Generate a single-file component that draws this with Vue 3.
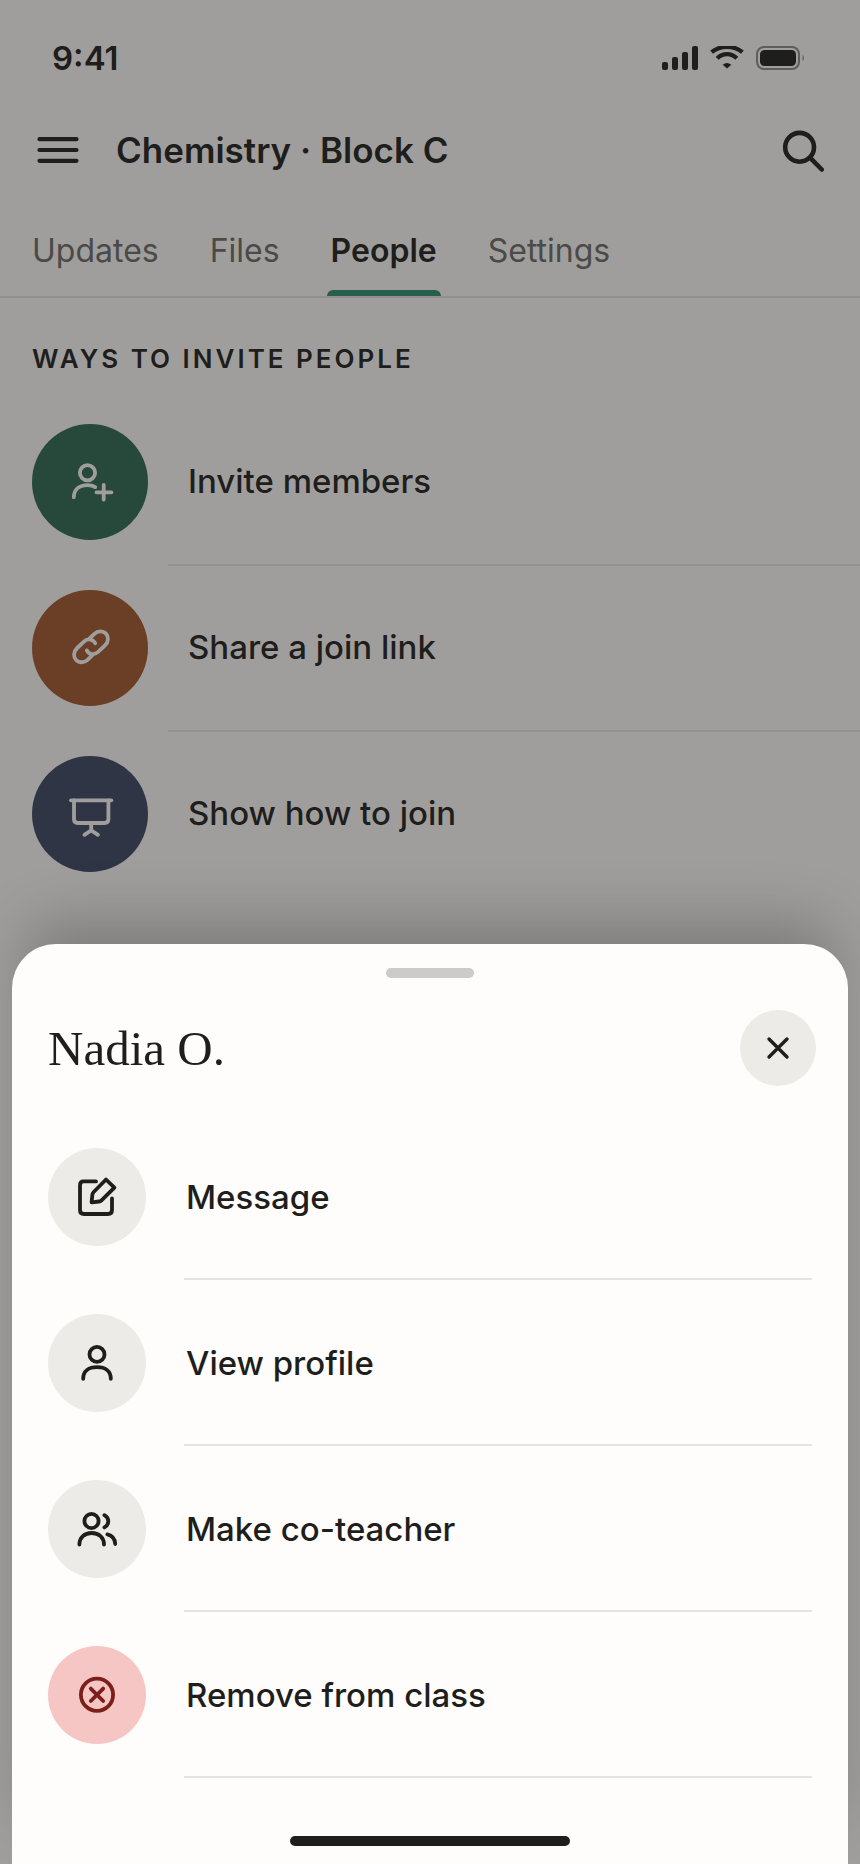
<script setup>
const tabs = [
  { label: 'Updates', active: false },
  { label: 'Files', active: false },
  { label: 'People', active: true },
  { label: 'Settings', active: false },
]

const invites = [
  {
    label: 'Invite members',
    tone: 'green',
    paths: [
      'M33.1 18.7a7.6 7.6 0 1 1-15.2 0a7.6 7.6 0 1 1 15.2 0Z',
      'M11.8 43.2C12 35.5 17.5 31.2 25.5 31.2C28.6 31.2 31.2 31.8 33.2 33.1',
      'M41.7 31v14.5M34.5 38.3h15',
    ],
  },
  {
    label: 'Share a join link',
    tone: 'brown',
    paths: [
      'M24.8 30.4C26.8 34.6 32.2 35.4 35.8 32.2L42.8 25.6C46.8 21.8 46.8 16.6 43.8 13.4C40.8 10.4 35.8 10.8 32.4 13.8L27.6 18.4',
      'M33.2 23.2C31.2 19 25.8 18.2 22.2 21.4L15.2 28C11.2 31.8 11.2 37 14.2 40.2C17.2 43.2 22.2 42.8 25.6 39.8L30.4 35.2',
    ],
  },
  {
    label: 'Show how to join',
    tone: 'navy',
    paths: [
      'M9 14.3h40.3',
      'M12 14.3v18.7q0 4 4 4h26.4q4 0 4-4V14.3',
      'M29.2 37v7.5M22.4 48.8l6.8-4.4l6.8 4.4',
    ],
  },
]

const actions = [
  {
    label: 'Message',
    danger: false,
    paths: [
      'M27 12.4H14.5q-3.5 0-3.5 4v24.6q0 4 4 4H39q4 0 4-4V29.5',
      'M37 10.5L45.4 18.6L32.5 31.4Q31.5 32.4 30 32.5L22.6 33.3L23.4 25.5Q23.6 24.1 24.7 23Z',
    ],
  },
  {
    label: 'View profile',
    danger: false,
    paths: [
      'M35.5 19.4a7.5 7.5 0 1 1-15 0a7.5 7.5 0 1 1 15 0Z',
      'M14.2 43.8C14.2 36 20 32.2 28 32.2S41.8 36 41.8 43.8',
    ],
  },
  {
    label: 'Make co-teacher',
    danger: false,
    paths: [
      'M29.6 20a7.1 7.1 0 1 1-14.2 0a7.1 7.1 0 1 1 14.2 0Z',
      'M10.4 43.6C10.4 36.6 15.5 32 22.7 32S35 36.6 35 43.6',
      'M35.4 14.2C40.6 17 40.6 23.6 35.4 26.4M38.4 33.4C43.5 34.6 46 38.3 46.2 43',
    ],
  },
  {
    label: 'Remove from class',
    danger: true,
    paths: [
      'M44.1 27.8a16.1 16.1 0 1 1-32.2 0a16.1 16.1 0 1 1 32.2 0Z',
      'M21.8 21.6l12.4 12.4M34.2 21.6L21.8 34',
    ],
  },
]
</script>

<template>
  <div class="screen">
    <main class="page">
      <div class="status">
        <span class="time">9:41</span>
        <div class="indicators">
          <svg width="36" height="24" viewBox="0 0 36 24" fill="currentColor" aria-hidden="true">
            <rect x="0" y="16" width="6" height="8" rx="2" />
            <rect x="10" y="11" width="6" height="13" rx="2" />
            <rect x="20" y="6" width="6" height="18" rx="2" />
            <rect x="30" y="0" width="6" height="24" rx="2" />
          </svg>
          <svg width="34" height="24" viewBox="0 0 34 24" aria-hidden="true">
            <g fill="none" stroke="currentColor" stroke-width="4.2">
              <path d="M1.6 6.2C10 -1 24 -1 32.4 6.2" />
              <path d="M7.2 12.4C12.5 6.7 21.5 6.7 26.8 12.4" />
            </g>
            <path d="M12.7 18.7Q17 15.4 21.3 18.7L17 22.6Z" fill="currentColor" />
          </svg>
          <svg width="49" height="24" viewBox="0 0 49 24" aria-hidden="true">
            <g opacity="0.5">
              <rect x="1" y="1" width="42" height="22" rx="7" fill="none" stroke="currentColor" stroke-width="2" />
              <path d="M46.5 9q3 3 0 6Z" fill="currentColor" />
            </g>
            <rect x="4" y="4" width="36" height="16" rx="4.5" fill="currentColor" />
          </svg>
        </div>
      </div>

      <header class="topbar">
        <button class="icon-button" type="button" aria-label="Open menu">
          <svg width="44" height="44" viewBox="0 0 44 44" aria-hidden="true">
            <path d="M3.5 11.2h37M3.5 22h37M3.5 32.8h37" fill="none" stroke="currentColor" stroke-width="4.2" stroke-linecap="round" />
          </svg>
        </button>
        <h1 class="class-name">Chemistry · Block C</h1>
        <button class="icon-button" type="button" aria-label="Search">
          <svg width="44" height="44" viewBox="0 0 44 44" fill="none" stroke="currentColor" stroke-linecap="round" aria-hidden="true">
            <circle cx="19.6" cy="19.3" r="14.4" stroke-width="4.6" />
            <path d="M31 30.6L41.7 41.5" stroke-width="4.6" />
          </svg>
        </button>
      </header>

      <nav class="tabs" aria-label="Class sections">
        <a v-for="tab in tabs" :key="tab.label" href="#" class="tab" :class="{ active: tab.active }">{{ tab.label }}</a>
      </nav>

      <section>
        <h2 class="section-title">WAYS TO INVITE PEOPLE</h2>
        <ul class="list">
          <li v-for="item in invites" :key="item.label">
            <button type="button" class="invite">
              <span class="disc" :class="item.tone">
                <svg class="glyph" viewBox="0 0 56 56" aria-hidden="true">
                  <path v-for="d in item.paths" :key="d" :d="d" />
                </svg>
              </span>
              <span class="invite-label">{{ item.label }}</span>
            </button>
          </li>
        </ul>
      </section>
    </main>

    <div class="scrim"></div>

    <section class="sheet" role="dialog" aria-labelledby="sheet-title">
      <div class="handle"></div>
      <header class="sheet-head">
        <h2 id="sheet-title" class="person">Nadia O.</h2>
        <button class="close" type="button" aria-label="Close">
          <svg width="28" height="28" viewBox="0 0 28 28" aria-hidden="true">
            <path d="M5 5l18 18M23 5L5 23" fill="none" stroke="currentColor" stroke-width="3.4" stroke-linecap="round" />
          </svg>
        </button>
      </header>
      <ul class="list">
        <li v-for="item in actions" :key="item.label">
          <button type="button" class="action">
            <span class="chip" :class="{ danger: item.danger }">
              <svg class="glyph" viewBox="0 0 56 56" aria-hidden="true">
                <path v-for="d in item.paths" :key="d" :d="d" />
              </svg>
            </span>
            <span class="action-label">{{ item.label }}</span>
          </button>
        </li>
      </ul>
      <div class="home-bar"></div>
    </section>
  </div>
</template>

<style>
body {
  margin: 0;
  background: #fefdfb;
}
</style>

<style scoped>
.screen {
  position: relative;
  min-height: 100vh;
  overflow: hidden;
  background: #fefcfa;
  color: #1e1f1c;
  font-family: Inter, "Liberation Sans", sans-serif;
}

button {
  padding: 0;
  border: 0;
  background: none;
  color: inherit;
  font: inherit;
  text-align: left;
  cursor: pointer;
}

svg {
  display: block;
}

.status {
  display: flex;
  align-items: center;
  justify-content: space-between;
  height: 116px;
  padding: 0 55px 0 52px;
}

.time {
  font-size: 33px;
  font-weight: 600;
}

.indicators {
  display: flex;
  gap: 12px;
}

.topbar {
  display: flex;
  align-items: center;
  gap: 36px;
  height: 68px;
  padding: 0 36px;
}

.class-name {
  flex: 1;
  margin: 0;
  font-size: 35px;
  font-weight: 600;
  line-height: 48px;
}

.tabs {
  display: flex;
  gap: 43px;
  height: 112px;
  padding: 0 28px;
  border-bottom: 2px solid #e6e6e3;
}

.tab {
  position: relative;
  display: flex;
  align-items: center;
  padding: 20px 4px 0;
  color: #6a6b66;
  font-size: 32px;
  text-decoration: none;
}

.tab.active {
  color: #1e1f1c;
  font-weight: 600;
}

.tab.active::after {
  content: "";
  position: absolute;
  right: 0;
  bottom: 0;
  left: 0;
  height: 6px;
  border-radius: 6px 6px 0 0;
  background: #2d9070;
}

.section-title {
  margin: 0;
  padding: 44px 32px 48px;
  font-size: 26px;
  font-weight: 600;
  letter-spacing: 3px;
  line-height: 34px;
}

.list {
  margin: 0;
  padding: 0;
  list-style: none;
}

.invite {
  display: grid;
  grid-template-columns: 116px 1fr;
  gap: 20px;
  width: 100%;
  padding-left: 32px;
}

.disc {
  display: grid;
  place-items: center;
  height: 116px;
  border-radius: 50%;
  color: #fdfcf9;
}

.green {
  background: #2c6a54;
}

.brown {
  background: #a3572e;
}

.navy {
  background: #3d4863;
}

.invite-label {
  display: flex;
  align-items: center;
  height: 114px;
  margin-bottom: 24px;
  padding: 0 20px 26px;
  border-bottom: 2px solid #e6e6e3;
  font-size: 33px;
  font-weight: 500;
}

li:last-child .invite-label {
  border-bottom-color: transparent;
}

.glyph {
  width: 56px;
  height: 56px;
  fill: none;
  stroke: currentColor;
  stroke-width: 3.8;
  stroke-linecap: round;
  stroke-linejoin: round;
}

.scrim {
  position: absolute;
  inset: 0;
  background: rgba(30, 29, 29, 0.42);
}

.sheet {
  position: absolute;
  right: 12px;
  bottom: 0;
  left: 12px;
  padding: 24px 36px 18px;
  border-radius: 44px 44px 0 0;
  background: #fefdfb;
  box-shadow: 0 -36px 60px -14px rgba(0, 0, 0, 0.22);
}

.handle {
  width: 88px;
  height: 10px;
  margin: 0 auto;
  border-radius: 5px;
  background: #cbcbc9;
}

.sheet-head {
  display: flex;
  align-items: center;
  justify-content: space-between;
  margin: 32px -4px 28px 0;
}

.person {
  margin: 0;
  font-family: "Liberation Serif", serif;
  font-size: 49px;
  font-weight: 400;
}

.close {
  display: grid;
  place-items: center;
  width: 76px;
  height: 76px;
  border-radius: 50%;
  background: #ecebe8;
}

.action {
  display: grid;
  grid-template-columns: 98px 1fr;
  align-items: center;
  gap: 38px;
  width: 100%;
}

.chip {
  display: grid;
  place-items: center;
  height: 98px;
  border-radius: 50%;
  background: #ecebe8;
}

.chip.danger {
  background: #f6c6c4;
  color: #7a1f1b;
}

.action-label {
  display: flex;
  align-items: center;
  height: 162px;
  padding: 2px 0 0 2px;
  border-bottom: 2px solid #e4e4e2;
  font-size: 33px;
  font-weight: 500;
}

.home-bar {
  width: 280px;
  height: 10px;
  margin: 58px auto 0;
  border-radius: 5px;
  background: #1e1f1c;
}
</style>
